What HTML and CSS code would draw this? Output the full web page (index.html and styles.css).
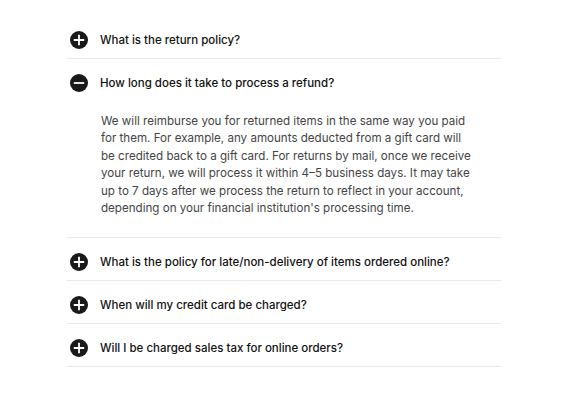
FILE: index.html
```html
<!DOCTYPE html>
<html>
<head>
<meta charset="utf-8">
<link rel="stylesheet" href="styles.css">
</head>
<body>
<div class="faq">
  <div class="item">
    <div class="question">
      <svg class="icon" viewBox="0 0 18 18"><circle cx="9" cy="9" r="9" fill="#1a1a1a"/><path d="M3.8 9h10.4M9 3.8v10.4" stroke="#fff" stroke-width="1.8"/></svg>
      <span>What is the return policy?</span>
    </div>
  </div>
  <div class="item">
    <div class="question">
      <svg class="icon" viewBox="0 0 18 18"><circle cx="9" cy="9" r="9" fill="#1a1a1a"/><path d="M3.8 9h10.4" stroke="#fff" stroke-width="1.8"/></svg>
      <span>How long does it take to process a refund?</span>
    </div>
    <p class="answer">We will reimburse you for returned items in the same way you paid for them. For example, any amounts deducted from a gift card will be credited back to a gift card. For returns by mail, once we receive your return, we will process it within 4–5 business days. It may take up to 7 days after we process the return to reflect in your account, depending on your financial institution's processing time.</p>
  </div>
  <div class="item">
    <div class="question">
      <svg class="icon" viewBox="0 0 18 18"><circle cx="9" cy="9" r="9" fill="#1a1a1a"/><path d="M3.8 9h10.4M9 3.8v10.4" stroke="#fff" stroke-width="1.8"/></svg>
      <span>What is the policy for late/non-delivery of items ordered online?</span>
    </div>
  </div>
  <div class="item">
    <div class="question">
      <svg class="icon" viewBox="0 0 18 18"><circle cx="9" cy="9" r="9" fill="#1a1a1a"/><path d="M3.8 9h10.4M9 3.8v10.4" stroke="#fff" stroke-width="1.8"/></svg>
      <span>When will my credit card be charged?</span>
    </div>
  </div>
  <div class="item">
    <div class="question">
      <svg class="icon" viewBox="0 0 18 18"><circle cx="9" cy="9" r="9" fill="#1a1a1a"/><path d="M3.8 9h10.4M9 3.8v10.4" stroke="#fff" stroke-width="1.8"/></svg>
      <span>Will I be charged sales tax for online orders?</span>
    </div>
  </div>
</div>
</body>
</html>
```
FILE: styles.css
```css
html, body {
  margin: 0;
  padding: 0;
  background: #fff;
}
body {
  font-family: Inter, "Noto Sans", sans-serif;
  padding-top: 16px;
}
.faq {
  width: 434px;
  margin-left: 67px;
}
.item {
  border-bottom: 1px solid #ebebeb;
}
.question {
  display: flex;
  align-items: center;
  gap: 12px;
  padding: 14px 0 8px 3px;
  font-size: 11.5px;
  line-height: 20px;
  font-weight: 500;
  color: #111;
}
.icon {
  width: 18px;
  height: 18px;
  flex: none;
}
.answer {
  margin: 0;
  padding: 12px 26px 20px 34px;
  font-size: 11.6px;
  line-height: 17.4px;
  color: #444;
}
```
